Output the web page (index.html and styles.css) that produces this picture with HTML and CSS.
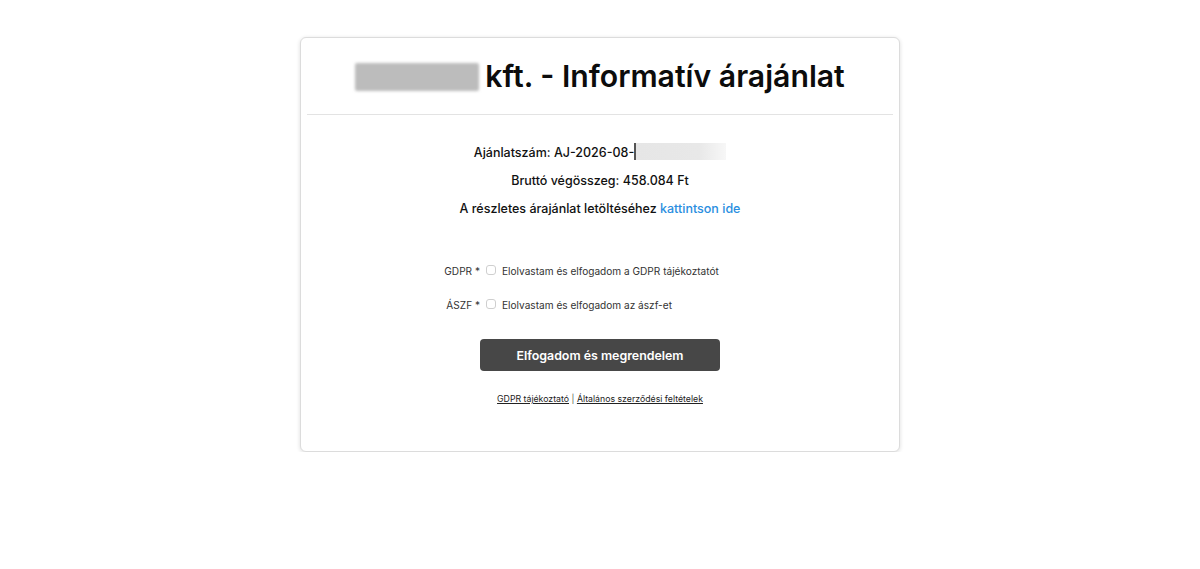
FILE: index.html
```html
<!DOCTYPE html>
<html lang="hu">
<head>
<meta charset="utf-8">
<title>Informatív árajánlat</title>
<link rel="stylesheet" href="styles.css">
</head>
<body>
<div class="card">
  <div class="card-header">
    <h1 class="title"><span class="blur-name"></span>kft. - Informatív árajánlat</h1>
  </div>
  <hr class="divider">
  <div class="info">
    <p class="info-line">Ajánlatszám: AJ-2026-08-<span class="blur-num"></span></p>
    <p class="info-line">Bruttó végösszeg: 458.084 Ft</p>
    <p class="info-line">A részletes árajánlat letöltéséhez <a class="link" href="#">kattintson ide</a></p>
  </div>
  <form class="consent">
    <div class="consent-row">
      <span class="consent-label">GDPR *</span>
      <span class="checkbox"></span>
      <span class="consent-text">Elolvastam és elfogadom a GDPR tájékoztatót</span>
    </div>
    <div class="consent-row">
      <span class="consent-label">ÁSZF *</span>
      <span class="checkbox"></span>
      <span class="consent-text">Elolvastam és elfogadom az ászf-et</span>
    </div>
    <div class="actions">
      <button type="button" class="btn">Elfogadom és megrendelem</button>
    </div>
  </form>
  <div class="footer-links">
    <a href="#">GDPR tájékoztató</a> <span class="sep">|</span> <a href="#">Általános szerződési feltételek</a>
  </div>
</div>
</body>
</html>
```
FILE: styles.css
```css
html, body {
  margin: 0;
  padding: 0;
  background: #ffffff;
}
body {
  font-family: Inter, "Noto Sans", sans-serif;
  color: #111;
}
.card {
  box-sizing: border-box;
  width: 600px;
  height: 415px;
  margin: 37px auto 0;
  border: 1px solid #dcdcdc;
  border-radius: 6px;
  box-shadow: 0 1px 4px rgba(0, 0, 0, 0.14);
  background: #fff;
}
.card-header {
  padding: 19px 0 18px;
}
.title {
  margin: 0;
  font-size: 30.2px;
  line-height: 39px;
  font-weight: 600;
  text-align: center;
  color: #0c0c0c;
  display: flex;
  justify-content: center;
  align-items: center;
}
.blur-name {
  display: inline-block;
  width: 124px;
  height: 28px;
  margin-right: 6px;
  background: #bcbcbc;
  border-radius: 2px;
  filter: blur(1.5px);
}
.divider {
  margin: 0 6px;
  border: 0;
  border-top: 1px solid #e3e3e3;
  height: 0;
}
.info {
  padding-top: 24px;
  text-align: center;
}
.info-line {
  margin: 0;
  font-size: 12.5px;
  line-height: 28px;
  font-weight: 500;
  color: #111;
}
.blur-num {
  display: inline-block;
  vertical-align: -3px;
  width: 90px;
  height: 17px;
  background: linear-gradient(90deg, #e6e6e6 0%, #e8e8e8 70%, #f7f7f7 100%);
  border-left: 2px solid #555;
  filter: blur(0.6px);
}
.link {
  color: #2a8ee0;
  text-decoration: none;
}
.consent {
  margin-top: 31px;
}
.consent-row {
  display: flex;
  align-items: center;
  height: 34px;
  font-size: 10.1px;
  color: #333;
}
.consent-label {
  width: 179px;
  text-align: right;
  margin-right: 6px;
}
.checkbox {
  box-sizing: border-box;
  width: 10px;
  height: 10px;
  border: 1px solid #cfcfcf;
  border-radius: 3px;
  margin-right: 6px;
  margin-top: -2px;
}
.actions {
  display: flex;
  justify-content: center;
  margin-top: 17px;
}
.btn {
  width: 240px;
  height: 32px;
  border: 0;
  border-radius: 4px;
  background: #474747;
  color: #fff;
  font-family: Inter, "Noto Sans", sans-serif;
  font-size: 12.4px;
  font-weight: 600;
  cursor: pointer;
}
.footer-links {
  margin-top: 23px;
  text-align: center;
  font-size: 8.75px;
  color: #222;
}
.footer-links a {
  color: #222;
  text-decoration: underline;
}
.sep {
  color: #555;
}
```
